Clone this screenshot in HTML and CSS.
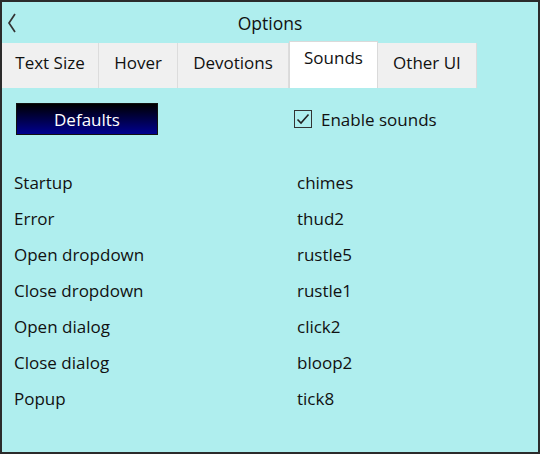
FILE: index.html
```html
<!DOCTYPE html>
<html lang="en">

<head>
    <meta charset="UTF-8">
    <meta name="viewport" content="width=device-width, initial-scale=1.0">
    <title>Options</title>
    <link rel="stylesheet" href="styles.css">
</head>

<body>
    <div class="window">
        <div class="titlebar">
            <svg class="back" width="12" height="22" viewBox="0 0 12 22">
                <path d="M9 2 L3 11 L9 20" fill="none" stroke="#333" stroke-width="1.7" />
            </svg>
            <span class="title">Options</span>
        </div>

        <div class="tabs">
            <div class="tab tab-text">Text Size</div>
            <div class="tab tab-hover">Hover</div>
            <div class="tab tab-devotions">Devotions</div>
            <div class="tab tab-sounds active">Sounds</div>
            <div class="tab tab-other">Other UI</div>
        </div>

        <div class="sounds-page">
            <div class="top-row">
                <button class="defaults-btn">Defaults</button>
                <label class="enable">
                    <span class="checkbox">
                        <svg width="16" height="16" viewBox="0 0 16 16">
                            <path d="M2.5 8.5 L6 12 L13.5 3.5" fill="none" stroke="#222" stroke-width="1.6" />
                        </svg>
                    </span>
                    Enable sounds
                </label>
            </div>

            <div class="sound-list">
                <div class="sound-row"><span class="event">Startup</span><span class="file">chimes</span></div>
                <div class="sound-row"><span class="event">Error</span><span class="file">thud2</span></div>
                <div class="sound-row"><span class="event">Open dropdown</span><span class="file">rustle5</span></div>
                <div class="sound-row"><span class="event">Close dropdown</span><span class="file">rustle1</span></div>
                <div class="sound-row"><span class="event">Open dialog</span><span class="file">click2</span></div>
                <div class="sound-row"><span class="event">Close dialog</span><span class="file">bloop2</span></div>
                <div class="sound-row"><span class="event">Popup</span><span class="file">tick8</span></div>
            </div>
        </div>
    </div>
</body>

</html>
```

FILE: styles.css
```css
* {
    margin: 0;
    padding: 0;
    box-sizing: border-box;
}

body {
    font-family: "Open Sans", "Noto Sans", sans-serif;
    font-size: 17px;
    color: #111;
    background-color: #afeeee;
}

.window {
    width: 540px;
    height: 454px;
    border: 2px solid #2b2b2b;
    background-color: #afeeee;
}

.titlebar {
    position: relative;
    height: 39px;
    display: flex;
    align-items: center;
    justify-content: center;
}

.title {
    font-size: 17.5px;
    margin-top: 3px;
}

.back {
    position: absolute;
    left: 4px;
    top: 10px;
}

.tabs {
    display: flex;
    align-items: flex-end;
    height: 47px;
}

.tab {
    height: 45px;
    display: flex;
    align-items: center;
    justify-content: center;
    padding-bottom: 7px;
    background-color: #f0f0f0;
    border-right: 1px solid #dcdcdc;
}

.tab-text { width: 97px; }
.tab-hover { width: 79px; }
.tab-devotions { width: 111px; }
.tab-sounds { width: 89px; }
.tab-other { width: 99px; }

.tab.active {
    height: 47px;
    align-items: flex-start;
    padding: 4px 0 0 0;
    background-color: #fff;
    border: 1px solid #dadada;
    border-bottom: none;
}

.sounds-page {
    padding: 15px 0 0 12px;
}

.top-row {
    display: flex;
    align-items: center;
    height: 32px;
}

.defaults-btn {
    width: 142px;
    height: 32px;
    margin-left: 2px;
    border: 1px solid #111;
    background: linear-gradient(#000000, #000090);
    color: #fff;
    font-family: inherit;
    font-size: 17px;
}

.enable {
    display: flex;
    align-items: center;
    margin-left: 136px;
}

.checkbox {
    width: 18px;
    height: 18px;
    border: 1px solid #333;
    margin-right: 9px;
    display: flex;
    align-items: center;
    justify-content: center;
}

.sound-list {
    margin-top: 29px;
}

.sound-row {
    display: flex;
    align-items: center;
    height: 36px;
}

.event {
    width: 283px;
}
```
